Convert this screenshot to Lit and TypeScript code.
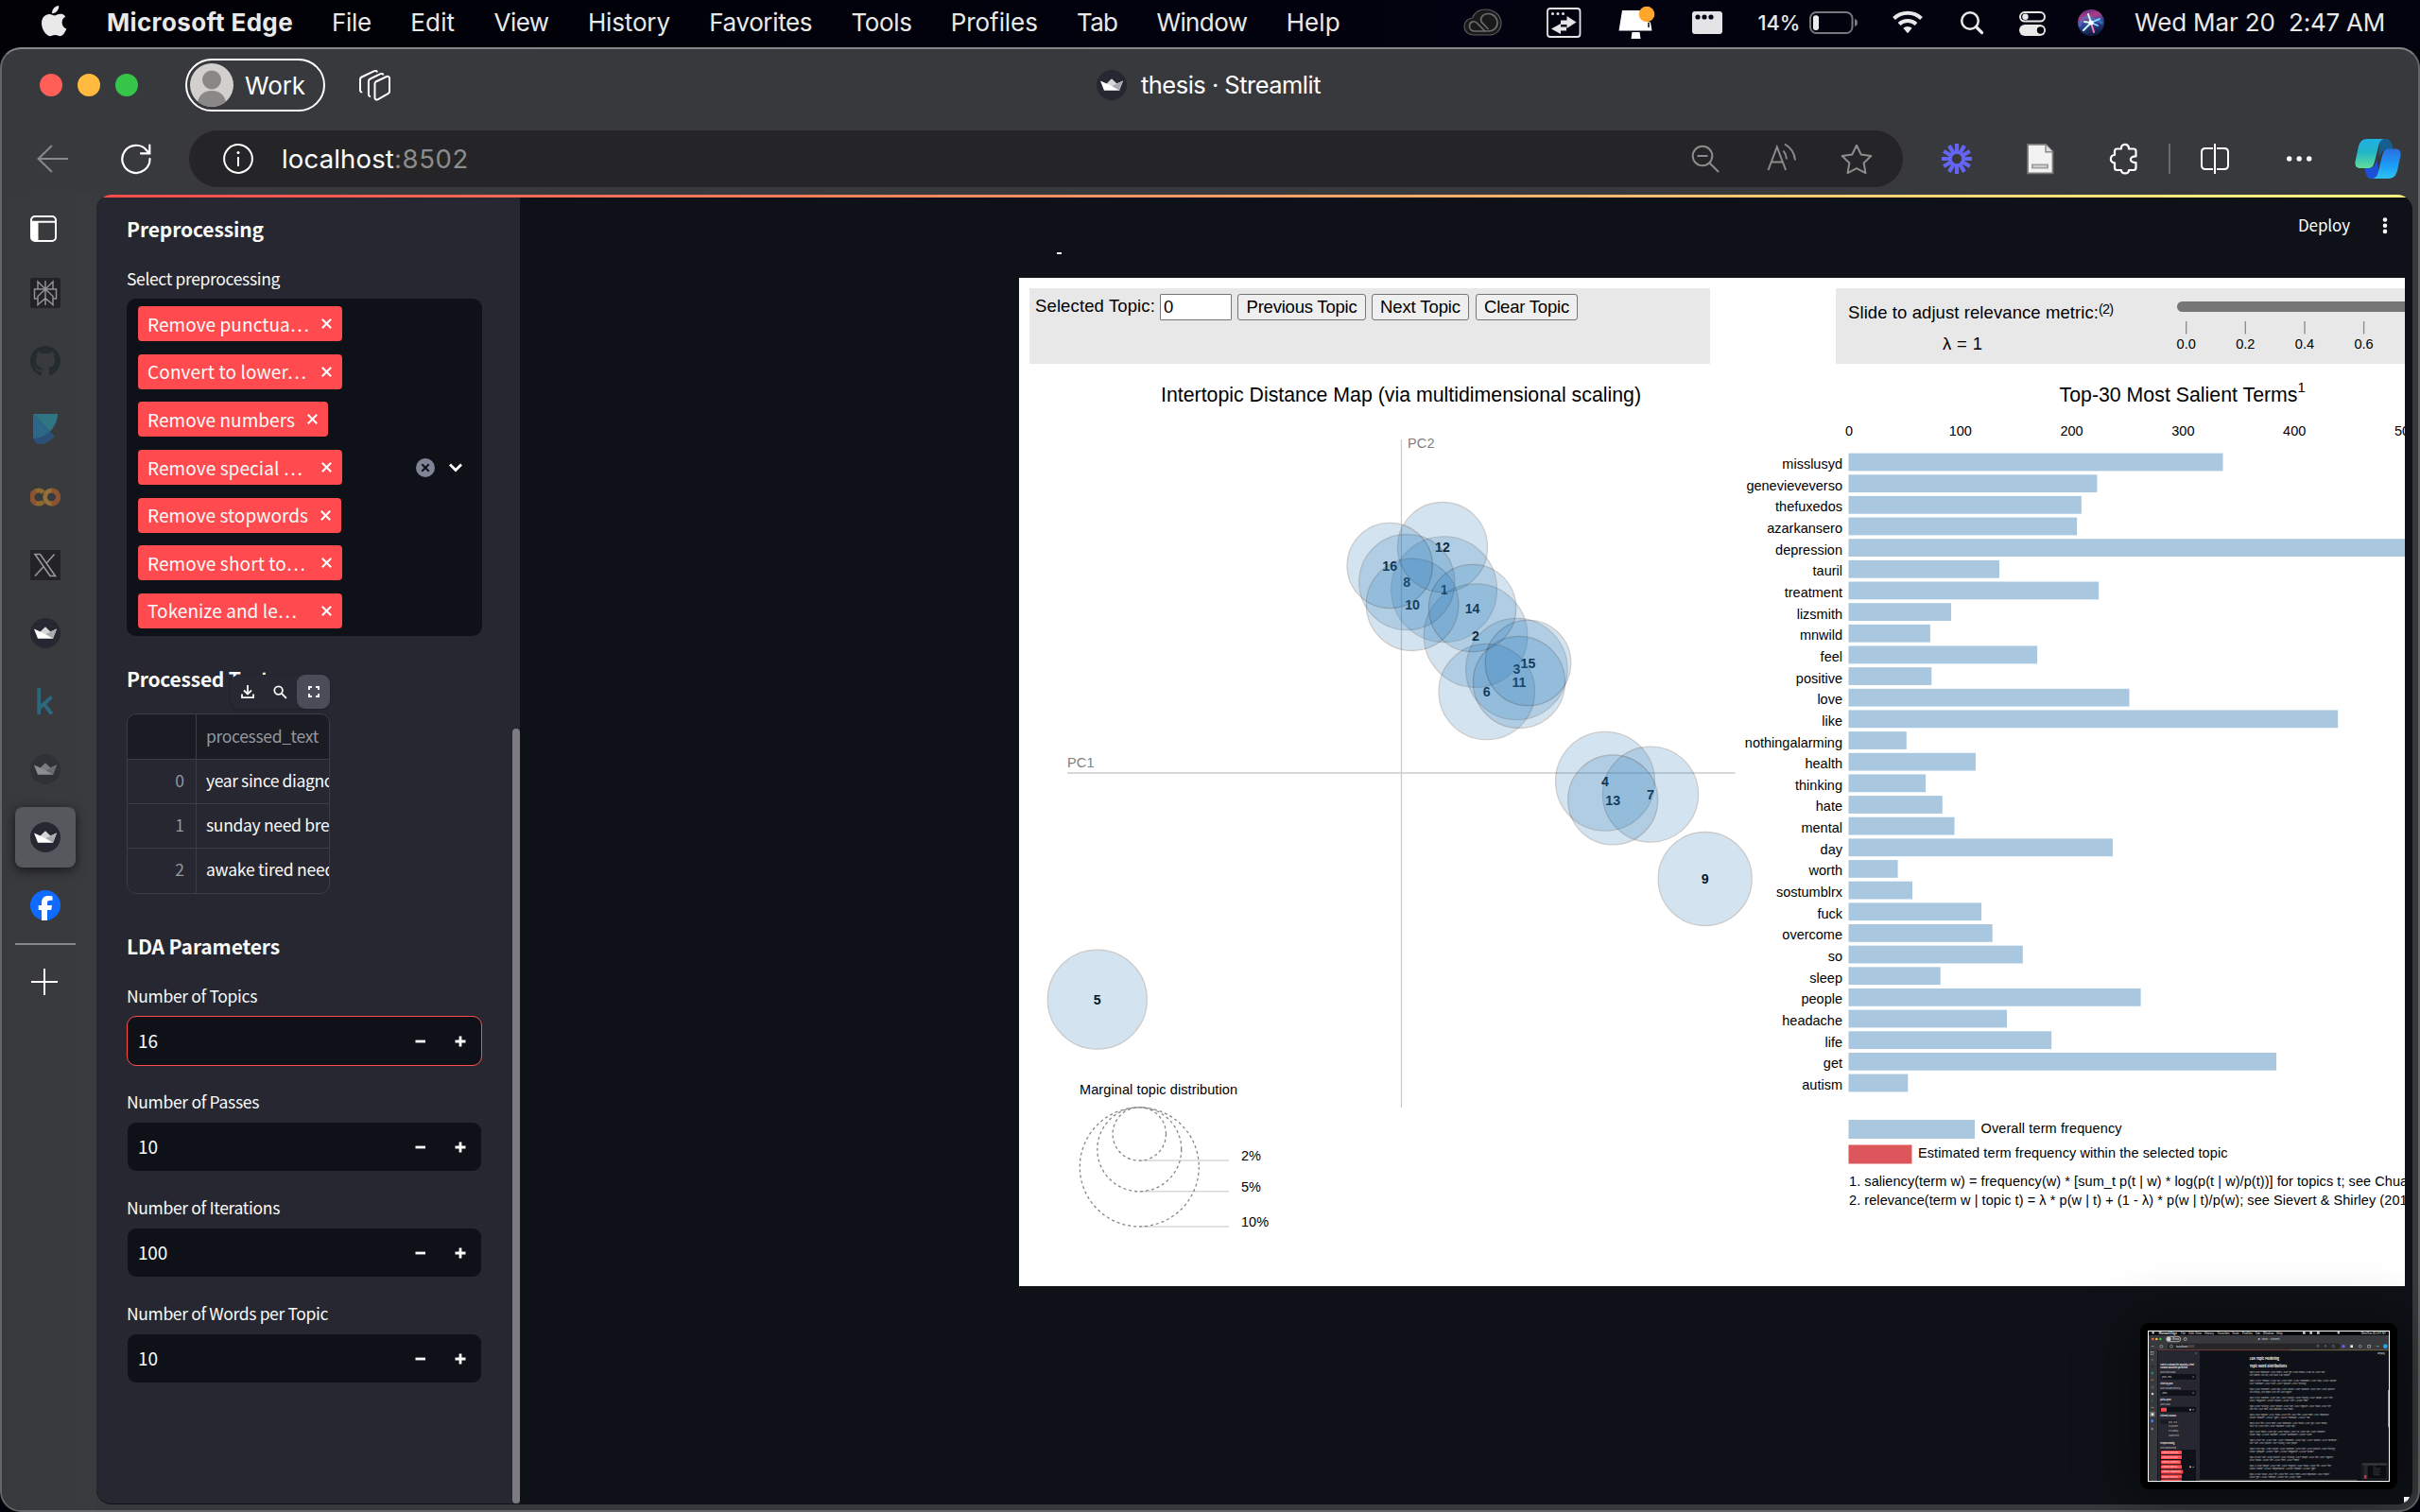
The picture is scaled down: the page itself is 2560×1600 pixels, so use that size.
import { LitElement, html, svg, css } from "lit";
import { customElement, property } from "lit/decorators.js";

/** One line of text whose tracking is adjusted so that it fills `w` pixels. */
@customElement("fit-text")
class FitText extends LitElement {
  @property({ type: Number }) w = 0;
  @property() t = "";
  static styles = css`
    :host { display: inline-block; white-space: pre; flex: none; }
  `;
  firstUpdated() {
    const span = this.renderRoot.querySelector("span") as HTMLElement;
    const natural = span.getBoundingClientRect().width;
    span.style.letterSpacing = `${(this.w - natural) / this.t.length}px`;
  }
  render() {
    return html`<span>${this.t}</span>`;
  }
}

const MENUS: [string, number][] = [
  ["File", 42], ["Edit", 47], ["View", 58], ["History", 87], ["Favorites", 109],
  ["Tools", 64], ["Profiles", 92], ["Tab", 43], ["Window", 96], ["Help", 57],
];

const CHIPS: [string, number, number][] = [
  ["Remove punctua…", 171, 216],
  ["Convert to lower…", 168, 216],
  ["Remove numbers", 156, 201],
  ["Remove special …", 164, 216],
  ["Remove stopwords", 170, 215],
  ["Remove short to…", 167, 216],
  ["Tokenize and le…", 158, 216],
];

const FIELDS: [string, number, string, number, boolean][] = [
  ["Number of Topics", 138, "16", 21, true],
  ["Number of Passes", 140, "10", 21, false],
  ["Number of Iterations", 162, "100", 31, false],
  ["Number of Words per Topic", 213, "10", 21, false],
];

const TERMS: [string, number][] = [
  ["misslusyd", 396], ["genevieveverso", 262.9], ["thefuxedos", 246.3], ["azarkansero", 241.6],
  ["depression", 700], ["tauril", 159.5], ["treatment", 264.7], ["lizsmith", 108.5],
  ["mnwild", 86.4], ["feel", 199.6], ["positive", 87.8], ["love", 297], ["like", 517.7],
  ["nothingalarming", 61.3], ["health", 134.5], ["thinking", 81.6], ["hate", 99.3],
  ["mental", 112], ["day", 279.4], ["worth", 52.1], ["sostumblrx", 67.5], ["fuck", 140.6],
  ["overcome", 152.2], ["so", 184.3], ["sleep", 97.2], ["people", 309.1],
  ["headache", 167.5], ["life", 214.7], ["get", 452.6], ["autism", 62.8],
];

const TOPICS: [number, number, number, number][] = [
  [1, 1527.6, 623.7, 55.8], [2, 1561, 672.6, 54.7], [3, 1604.4, 708, 53.6],
  [4, 1698, 826.7, 52.4], [5, 1160.8, 1057.7, 52.5], [6, 1572.8, 732, 50.7],
  [7, 1746, 840.6, 50.5], [8, 1488.3, 616, 50.5], [9, 1803.7, 930, 49.5],
  [10, 1494.1, 639.8, 48.7], [11, 1607, 722, 48.5], [12, 1526, 579, 47.5],
  [13, 1706.2, 846.4, 47.4], [14, 1557.6, 643.5, 46.1], [15, 1616.5, 701.5, 45.2],
  [16, 1470.2, 598.5, 45.1],
];

const MINI_WORDS = ["depression", "health", "get", "mental", "so", "one", "treatment", "day", "autism", "someone",
  "love", "positive", "thinking", "people", "like", "negative", "know", "life", "feel", "need"];
const miniLine = (k: number, from: number, n: number, lead: string) =>
  lead + Array.from({ length: n }, (_, i) =>
    `0.0${10 + ((k * 7 + i * 5) % 39)}*"${MINI_WORDS[(k * 3 + from + i) % MINI_WORDS.length]}"`).join(" + ");

const crown = (dim = false) => svg`
  <g opacity=${dim ? 0.42 : 1}>
    <circle cx="16" cy="16" r="16" fill="#262730"></circle>
    <path d="M4 11.4 10.8 14.4 16 9.4 21.2 14.4 28 11.4 24 21.8H8Z" fill="#fff"></path>
    <path d="M16 9.4 21.2 14.4 16 17 10.8 14.4Z" fill="#d6d6d9"></path>
    <path d="M28 11.4 24 21.8 16 17Z" fill="#a9aab0"></path>
  </g>`;

const minus = html`<svg width="12" height="14" viewBox="0 0 12 14"><path d="M.5 7h10.500" stroke="#fafafa" stroke-width="2.800"/></svg>`;
const plus = html`<svg width="12" height="14" viewBox="0 0 12 14"><path d="M.5 7h11M6 1.500v11" stroke="#fafafa" stroke-width="2.800"/></svg>`;

@customElement("app-root")
class AppRoot extends LitElement {
  static styles = css`
    :host { display: block; width: 2560px; height: 1600px; overflow: hidden; background: #02020a; }
    * { box-sizing: border-box; }
    svg { display: block; flex: none; }
    .desktop { width: 2560px; height: 1600px; display: flex; flex-direction: column; position: relative;
      font-family: Inter, "Liberation Sans", sans-serif; color: #fff; }
    .menubar { height: 50px; flex: none; display: flex; align-items: flex-start; padding-left: 43px;
      background: linear-gradient(90deg, #000005, #020210 60%, #02030e); color: #e9e9ea;
      font-size: 26px; line-height: 47px; }
    .menubar .app { font-weight: 700; margin-left: 42px; }
    .menus { display: flex; gap: 41.3px; margin-left: 41px; flex: 1; }
    .menus fit-text, .app { display: block; }
    .clock { display: flex; width: 302px; flex: none; }
    .window { height: 1550px; flex: none; border: 2px solid #646567; border-top-color: #858688;
      border-radius: 22px; background: #38393c; display: flex; flex-direction: column; overflow: hidden; }
    .titlebar { height: 76px; flex: none; display: flex; align-items: center; padding-left: 40px; }
    .lights { display: flex; gap: 16px; }
    .light { width: 24px; height: 24px; border-radius: 50%; }
    .red { background: #ff5f57; } .amber { background: #ffba3f; } .green { background: #35c649; }
    .pill { margin-left: 50px; width: 148px; height: 56px; border: 2px solid #fff; border-radius: 28px;
      display: flex; align-items: center; padding-left: 3px; font-size: 26px; }
    .pill fit-text { margin-left: 12px; }
    .spaces { margin-left: 34px; }
    .tabtitle { margin-left: 746px; display: flex; align-items: center; gap: 15px; font-size: 25.5px; }
    .tabtitle fit-text { margin-top: -2px; }
    .toolbar { height: 78px; flex: none; display: flex; align-items: center; padding: 2px 0 0 36px; }
    .reload { margin-left: 56px; }
    .address { margin-left: 40px; width: 1813px; height: 60px; border-radius: 30px; background: #252527;
      display: flex; align-items: center; padding-left: 36px; font-size: 27.5px; }
    .address .host { margin-left: 30px; }
    .address .port { color: #8c8c8d; flex: 1; }
    .tools { margin-left: 27px; }
    .body { display: flex; flex: 1; min-height: 0; }
    .rail { width: 100px; flex: none; display: flex; flex-direction: column; padding: 0 0 0 14px;
      background: linear-gradient(90deg, #38393b, #3a3b3e); }
    .slot { width: 64px; height: 72px; display: flex; align-items: center; justify-content: center; }
    .slot.first { height: 68px; justify-content: flex-start; padding-left: 16px; padding-top: 4px; }
    .tile { width: 64px; height: 64px; border-radius: 8px; background: #57585d; display: flex; align-items: center;
      justify-content: center; box-shadow: 0 3px 12px rgba(0,0,0,.6); }
    .raildiv { width: 64px; height: 2px; background: #86878a; margin-top: 4px; }
    .plus { margin: 24px 0 0 16px; }
    .page { width: 2450px; height: 1385px; flex: none; border-radius: 16px; overflow: hidden;
      background: #0e1117; box-shadow: 0 1px 0 #121216; display: flex; flex-direction: column; }
    .strip { height: 3px; flex: none; background: linear-gradient(90deg, #ff4b4b, #ffa068 50%, #fffd80); }
    .panes { display: flex; flex: 1; min-height: 0; }
    .side { width: 448px; flex: none; background: #262730; color: #fafafa; padding: 17px 0 0 32px; display: flex;
      font-family: "Noto Sans CJK SC", "Noto Sans", sans-serif; }
    .col { width: 376px; flex: none; display: flex; flex-direction: column; }
    .scroll { margin: 545px 0 0 32px; width: 8px; height: 820px; border-radius: 4px; background: #7c7b81; }
    .h { height: 32px; line-height: 32px; font-size: 21px; font-weight: 700; }
    .label { height: 30px; line-height: 33px; font-size: 17.5px; margin-top: 20px; }
    .select { margin-top: 8px; height: 357px; border-radius: 10px; background: #0e1117; display: flex;
      align-items: center; }
    .chips { display: flex; flex-direction: column; gap: 13.6px; margin-left: 12px; width: 294px; }
    .chip { height: 37px; border-radius: 4px; background: #ff4b4f; display: flex; align-items: center;
      justify-content: space-between; padding: 0 11px 0 10px; font-size: 19px; line-height: 35px; }
    .chip fit-text { margin-top: -1px; }
    .chip.w216 { width: 216px; } .chip.w215 { width: 215px; } .chip.w201 { width: 201px; }
    .chev { margin-left: 13px; }
    .h.proc { margin-top: 29px; } .h.lda { margin-top: 39px; }
    .tablewrap { position: relative; margin-top: 21px; width: 215px; }
    .table { width: 215px; height: 191px; border: 1px solid #3b3c46; border-radius: 10px; overflow: hidden;
      font-size: 17.5px; }
    .row { display: flex; height: 47px; border-bottom: 1px solid #3b3c46; line-height: 44px; }
    .row:last-child { border: 0; height: 48px; }
    .row.head { background: #1a1c24; color: #96979d; height: 48px; line-height: 45px; }
    .idx { width: 73px; flex: none; border-right: 1px solid #3b3c46; text-align: right; padding-right: 12px; color: #96979d; }
    .cell { padding-left: 10px; overflow: hidden; }
    .tbar { position: absolute; right: 0; top: -41px; width: 105px; height: 36px; border-radius: 9px;
      background: #272831; box-shadow: 0 1px 3px rgba(0,0,0,.22); display: flex; align-items: center; }
    .tbtn { width: 35px; height: 36px; display: flex; align-items: center; justify-content: center; border-radius: 9px; }
    .tbtn.on { background: #4a4c57; }
    .num { margin-top: 8px; height: 53px; border: 1px solid transparent; border-radius: 10px; background: #0e1117;
      background-clip: padding-box; display: flex; align-items: center; padding: 0 16px 0 11px; font-size: 19px; line-height: 49px; }
    .num.focus { border-color: #ff4b4f; }
    .num .v { flex: 1; margin-top: -2px; }
    .num svg + svg { margin-left: 30px; }
    .group + .group { margin-top: 21px; }
    .group .label { margin-top: 0; }
    .fields { margin-top: 20px; }
    .main { width: 2002px; display: flex; flex-direction: column; font-family: "Liberation Sans", Arial, sans-serif; }
    .top { height: 85px; display: flex; align-items: flex-start; padding-top: 13.5px;
      font: 17px/30px "Noto Sans CJK SC", "Noto Sans", sans-serif; }
    .dash { margin: 44.500px 0 0 568px; width: 5px; height: 2px; background: #fafafa; }
    .deploy { margin-left: 1308px; }
    .kebab { margin-left: 32.500px; margin-top: 6px; }
    .frame { margin-left: 528px; width: 1466px; height: 1067px; background: #fff; overflow: hidden; color: #000;
      padding-top: 11px; }
    .bars { display: flex; height: 80px; width: 1600px; padding-left: 11px; font-size: 18.5px; }
    .bar1 { width: 720px; background: #e8e8e8; display: flex; align-items: flex-start; padding: 6px 0 0 6px; line-height: 26px; }
    .tinput { margin-left: 5px; width: 76px; height: 28px; border: 1px solid #767676; border-radius: 1px; background: #fff; padding-left: 3px; }
    .btn { height: 28px; border: 1px solid #767676; border-radius: 3px; background: #efefef; margin-left: 6px; text-align: center; }
    .b1 { width: 136px; } .b2 { width: 103px; } .b3 { width: 108px; margin-left: 7px; }
    .bar2 { width: 700px; margin-left: 133px; background: #e8e8e8; }
    .thumb { position: absolute; left: 2264px; top: 1400px; width: 272px; height: 176px; border-radius: 9px; background: #000;
      display: flex; align-items: center; justify-content: center; box-shadow: 0 8px 60px 10px rgba(0,0,0,.38); }
    .corner { position: absolute; left: 2543px; top: 1584px; }
  `;

  menubar() {
    return html`<div class="menubar">
      <svg width="28" height="48" viewBox="0 0 28 48">
        <path fill="#e9e9ea" d="M19.200 6c.3 2.200-.6 4.300-1.900 5.800-1.300 1.500-3.300 2.600-5.200 2.400-.3-2.100.7-4.300 1.900-5.600C15.400 7.100 17.500 6.100 19.200 6ZM26.300 17.600c-2.300 1.400-3.700 3.400-3.700 6.200 0 3.300 2 5.600 4.700 6.700-.7 2.100-3.600 7.800-6.700 7.800-1.900 0-2.900-1.200-5.200-1.200-2.400 0-3.500 1.200-5.300 1.200C6.300 38.300 1 31.800 1 24.600c0-6.300 4-9.700 8.100-9.700 2.400 0 4.300 1.500 5.800 1.500 1.400 0 3.500-1.600 6.300-1.600 1.400 0 3.700.5 5.100 2.800Z"/>
      </svg>
      <fit-text class="app" .w=${197} .t=${"Microsoft Edge"}></fit-text>
      <div class="menus">${MENUS.map(([t, w]) => html`<fit-text .w=${w} .t=${t}></fit-text>`)}</div>
      <svg width="718" height="48" viewBox="1540 0 718 48">
        <defs>
          <linearGradient id="siri" x1="0" y1="0" x2=".3" y2="1"><stop offset="0" stop-color="#4a2f86"/><stop offset=".35" stop-color="#b23c86"/><stop offset=".6" stop-color="#31489c"/><stop offset="1" stop-color="#151d44"/></linearGradient>
        </defs>
        <path d="M1559 37c-6 0-10-4-10-9s3.500-8.500 8.500-9C1560 13 1565 10 1571 10c9 0 17 6 17 14.500 0 7.500-5.500 12.500-13 12.500Z" fill="#1a1a1b" stroke="#5a5a5c" stroke-width="1.200"/>
        <path d="M1571.500 33.500 1562 24c-2.500-2.500-7.500-1-7.500 3.500 0 3 2 5.500 5.500 5.500h14c6 0 10-3.500 10-9 0-5-4-9.500-9.500-9.500-6 0-9 4.500-7.500 8.500l7.500 8" fill="none" stroke="#6c6c6e" stroke-width="1.700"/>
        <rect x="1637" y="9" width="34.500" height="30" rx="3" fill="none" stroke="#e4e4e6" stroke-width="1.800"/>
        <g fill="#e4e4e6"><circle cx="1642.500" cy="14.500" r="1.500"/><circle cx="1648" cy="14.500" r="1.500"/><circle cx="1653.500" cy="14.500" r="1.500"/>
          <path d="M1651 21.500h6.500v-4.500l10 6.500-10 6.500v-4H1651ZM1657 28.500h-6v-3.500l-10 5.500 10 5.500v-3.500h6Z"/></g>
        <path d="M1716 11h23.500a8 8 0 0 0 6.500 12.500l1.500 9H1712.500Z" fill="#fff"/><path d="M1726.500 34h8l1 7h-10Z" fill="#fff"/>
        <path d="M1744 24v5" stroke="#02030f" stroke-width="1.500"/>
        <circle cx="1742" cy="15" r="8.300" fill="#ffa62b"/>
        <rect x="1790" y="12" width="32" height="24" rx="3" fill="#e4e4e6"/>
        <g fill="#05060f"><circle cx="1796" cy="18" r="2.600"/><circle cx="1803" cy="18" r="2.600"/><circle cx="1810" cy="18" r="2.600"/></g>
        <text x="1859.500" y="32" font-size="22" font-weight="500" textLength="45" lengthAdjust="spacingAndGlyphs" fill="#e9e9ea">14%</text>
        <rect x="1915" y="13" width="44.500" height="22" rx="6.500" fill="none" stroke="#77777c" stroke-width="2"/>
        <rect x="1918" y="16.300" width="6" height="15.600" rx="2.600" fill="#ececee"/>
        <path d="M1962 20c2.200.6 3 2 3 4s-.8 3.400-3 4Z" fill="#77777c"/>
        <g fill="none" stroke="#e9e9ea" stroke-width="4"><path d="M2003.500 19.500a21 21 0 0 1 29 0" /><path d="M2009 25.500a13 13 0 0 1 18 0"/></g>
        <path d="M2018 35.300l-4.700-5.500a7 7 0 0 1 9.400 0Z" fill="#e9e9ea"/>
        <circle cx="2084" cy="22" r="8.800" fill="none" stroke="#e9e9ea" stroke-width="2.500"/><path d="M2090.500 28.500 2096.500 34.500" stroke="#e9e9ea" stroke-width="3.200" stroke-linecap="round"/>
        <rect x="2137" y="13" width="26" height="9.600" rx="4.800" fill="none" stroke="#e9e9ea" stroke-width="2"/><circle cx="2142.500" cy="17.800" r="3.200" fill="#e9e9ea"/>
        <rect x="2136" y="26" width="28" height="12" rx="6" fill="#e9e9ea"/><circle cx="2158.500" cy="32" r="3.700" fill="#05060f"/>
        <circle cx="2212" cy="24" r="14" fill="url(#siri)"/>
        <path d="M2200 28c1-8 6-12 12-9 5 3 9 2 12 6" fill="none" stroke="#3a86c8" stroke-width="3" opacity=".6"/>
        <path d="M2212 24l-3-9M2212 24l-8 8M2212 24l-7-1" stroke="#c8fbf2" stroke-width="2" stroke-linecap="round"/>
        <path d="M2212 24l9-4M2212 24l7 3" stroke="#8fe0ff" stroke-width="1.800" stroke-linecap="round"/><path d="M2212 24l3 10" stroke="#ff7ab4" stroke-width="2" stroke-linecap="round"/>
        <circle cx="2212" cy="24" r="2.500" fill="#fff"/>
      </svg>
      <div class="clock"><fit-text .w=${163} .t=${"Wed Mar 20  "}></fit-text><fit-text .w=${102} .t=${"2:47 AM"}></fit-text></div>
    </div>`;
  }

  titlebar() {
    return html`<div class="titlebar">
      <div class="lights"><div class="light red"></div><div class="light amber"></div><div class="light green"></div></div>
      <div class="pill">
        <svg width="46" height="46" viewBox="0 0 46 46"><clipPath id="av"><circle cx="23" cy="23" r="23"/></clipPath>
          <g clip-path="url(#av)"><rect width="46" height="46" fill="#d2d0ce"/><circle cx="23" cy="17.500" r="10" fill="#8a8886"/>
          <path d="M7.500 46c0-11 6-17 15.500-17s15.500 6 15.500 17Z" fill="#8a8886"/></g></svg>
        <fit-text .w=${64} .t=${"Work"}></fit-text>
      </div>
      <svg class="spaces" width="36" height="36" viewBox="0 0 36 36" fill="none" stroke="#fff" stroke-width="2" stroke-linejoin="round">
        <path d="M19.500 14.500l11.500-5.500c1.500-.7 3 .2 3 1.800v14c0 1-.5 1.800-1.500 2.300l-11 6.200c-1.500.8-3-.1-3-1.700v-14.500c0-1.100.4-2.100 1-2.600Z"/>
        <path d="M27.500 7.500c-.4-1.500-1.600-2-3-1.300l-11 5.300c-1 .5-1.600 1.300-1.600 2.500v14c0 1.400 1 2.200 2.200 2"/>
        <path d="M21 4.500c-.4-1.500-1.600-2-3-1.300L4.600 9.500C3.500 10 3 10.800 3 12v11.500c0 1.400 1 2.200 2.200 2"/>
      </svg>
      <div class="tabtitle"><svg width="32" height="32" viewBox="0 0 32 32">${crown()}</svg>
        <fit-text .w=${190} .t=${"thesis · Streamlit"}></fit-text></div>
    </div>`;
  }

  toolbar() {
    const rays = Array.from({ length: 12 }, (_, i) =>
      svg`<path d="M2070 160.500V152" stroke="#6464f5" stroke-width="4.200" transform="rotate(${i * 30} 2070 168)"></path>`);
    return html`<div class="toolbar">
      <svg width="34" height="34" viewBox="0 0 34 34" fill="none" stroke="#89898b" stroke-width="2"><path d="M17 3 2.500 17 17 31M3 17h31"/></svg>
      <svg class="reload" width="32" height="34" viewBox="0 0 32 34" fill="none" stroke="#fff" stroke-width="2.200" stroke-linecap="round"><path d="M30.500 17A14.600 14.600 0 1 1 27.500 8.500L30 11M30.300 2.500V11.300H21"/></svg>
      <div class="address">
        <svg width="32" height="32" viewBox="0 0 32 32"><circle cx="16" cy="16" r="14.900" fill="none" stroke="#fff" stroke-width="2"/><circle cx="16" cy="9.500" r="1.500" fill="#fff"/><path d="M16 14v10" stroke="#fff" stroke-width="2"/></svg>
        <fit-text class="host" .w=${119} .t=${"localhost"}></fit-text><div class="port"><fit-text .w=${79} .t=${":8502"}></fit-text></div>
        <svg width="230" height="60" viewBox="1783 138 230 60" fill="none" stroke="#8c8c8d" stroke-width="2">
          <circle cx="1801" cy="165" r="10.300"/><path d="M1795.500 165h11M1808.500 172.500l9.500 9.500"/>
          <path d="M1870.500 180l9.300-24.500 9.300 24.500M1873.500 171.500h12.500M1886.500 159.500c2 2.500 3.300 6 3.500 9M1888 152.500c7 4 10.500 10 11 17"/>
          <path d="M1964 153.800l4.700 9.700 10.600 1.500-7.700 7.500 1.900 10.600-9.500-5-9.500 5 1.900-10.600-7.700-7.500 10.600-1.500Z" stroke-linejoin="round"/>
        </svg>
      </div>
      <svg class="tools" width="510" height="60" viewBox="2040 138 510 60">
        <defs>
          <linearGradient id="c1" x1="0" y1="0" x2="0" y2="1"><stop offset="0" stop-color="#1fb0e4"/><stop offset=".45" stop-color="#22b5c8"/><stop offset="1" stop-color="#62dd96"/></linearGradient>
          <linearGradient id="c2" x1="0" y1="0" x2="0" y2="1"><stop offset="0" stop-color="#2a6fdc"/><stop offset=".55" stop-color="#1c9cf8"/><stop offset="1" stop-color="#2fc3f0"/></linearGradient>
        </defs>
        ${rays}<circle cx="2070" cy="168" r="7" fill="none" stroke="#6464f5" stroke-width="3.600"/>
        <path d="M2145 152.800h19l7.500 7.500v23h-26.500Z" fill="#f2f2f2" stroke="#777" stroke-width="1.800"/><path d="M2164 152.800v8h7.500" fill="#ddd" stroke="#777" stroke-width="1.200"/>
        <rect x="2149" y="173.500" width="18" height="5" fill="#a0a0a0"/><path d="M2151 176h14" stroke="#ddd" stroke-width="1.500"/>
        <path d="M2244 157.500c-1-6 8.500-6.500 8 0h5c1.500 0 2.500 1 2.500 2.500v5.500c-7.500-.5-7.500 7 0 6.500v5.500c0 1.500-1 2.500-2.500 2.500h-5c.5 4.500-8 4.500-8 0h-4.500c-1.500 0-2.500-1-2.500-2.500v-5.200c-5.500.3-5.500-8.600 0-8.300v-4c0-1.500 1-2.500 2.500-2.500Z" fill="none" stroke="#fff" stroke-width="2.200" stroke-linejoin="round"/>
        <path d="M2295 152v32" stroke="#68696b" stroke-width="2"/>
        <path d="M2338 157h-5c-2.500 0-4 1.500-4 4v14c0 2.500 1.500 4 4 4h5M2348 157h5c2.500 0 4 1.500 4 4v14c0 2.500-1.500 4-4 4h-5M2343 152v32M2338 157h3M2338 179h3M2345 157h3M2345 179h3" fill="none" stroke="#fff" stroke-width="2"/>
        <g fill="#fff"><circle cx="2421.700" cy="168" r="2.700"/><circle cx="2432.200" cy="168" r="2.700"/><circle cx="2442.700" cy="168" r="2.700"/></g>
        <path d="M2517 147h6c4 0 6 1.500 7 5l2 6.500h-7c-5 0-7 4-8.500 9.500Z" fill="#155e8f"/>
        <path d="M2501 178h5c5 0 7-4 8.500-9.500l1.500 12-3 8.500h-4c-4 0-5-1.500-6-5Z" fill="#1d50d8"/>
        <path d="M2505 147h17c-4 1-5 4-6 8l-4 16c-1.500 5-3 7-7 7h-8c-4 0-6-2-5.500-7l3-14c1.500-7 4-10 10.500-10Z" fill="url(#c1)"/>
        <path d="M2526 189h-16c4-1 5-4 6-8l4-16c1.500-5 3-7.500 7-7.500h7c4 0 6 2 5.500 7l-3 14c-1.500 7-4 10.500-10.500 10.500Z" fill="url(#c2)"/>
      </svg>
    </div>`;
  }

  rail() {
    return html`<div class="rail">
      <div class="slot first"><svg width="28" height="28" viewBox="0 0 28 28"><rect x="1" y="1" width="26" height="26" rx="4" fill="none" stroke="#fff" stroke-width="2"/><path d="M1 6.800h26" stroke="#fff" stroke-width="2"/><path d="M1 7h7.500v20H4a3 3 0 0 1-3-3Z" fill="#fff"/></svg></div>
      <div class="slot"><svg width="32" height="32" viewBox="0 0 32 32"><rect width="32" height="32" rx="2.500" fill="#232325"/><g fill="none" stroke="#8f9092" stroke-width="1.500"><path d="M16 3v26M8 4v8h16V4l-8 8Zm8 8L8 19.500v9l8-7 8 7v-9ZM8 22H4.500V12h23v10H24"/></g></svg></div>
      <div class="slot"><svg width="32" height="32" viewBox="0 0 16 16"><path fill="#252c2f" d="M8 0C3.580 0 0 3.580 0 8c0 3.540 2.290 6.530 5.470 7.590.4.070.55-.17.55-.38 0-.19-.01-.82-.01-1.490-2.010.37-2.530-.49-2.690-.94-.09-.23-.48-.94-.82-1.130-.28-.15-.68-.52-.01-.53.63-.01 1.080.58 1.230.82.72 1.210 1.870.87 2.330.66.07-.52.28-.87.51-1.070-1.780-.2-3.640-.89-3.640-3.950 0-.87.31-1.590.82-2.150-.08-.2-.36-1.020.08-2.120 0 0 .67-.21 2.200.82.64-.18 1.320-.27 2-.27s1.360.09 2 .27c1.530-1.040 2.200-.82 2.200-.82.44 1.100.16 1.920.08 2.120.51.56.82 1.270.82 2.150 0 3.070-1.870 3.750-3.650 3.950.29.25.54.73.54 1.480 0 1.070-.01 1.930-.01 2.200 0 .21.15.46.55.38A8.010 8.010 0 0 0 16 8c0-4.420-3.580-8-8-8Z"/></svg></div>
      <div class="slot"><svg width="26" height="32" viewBox="0 0 26 32"><path d="M0 0h26c0 7-3 13-8 18.500Z" fill="#2f7583"/><path d="M0 0 18 18.500C13 23.500 7 26 0 26Z" fill="#2c6689"/><path d="M0 26c7 0 13-2.500 18-7.500l5 5C18 29 13 32 8 32c-4 0-6-2-8-6Z" fill="#2b5078"/></svg></div>
      <div class="slot"><svg width="32" height="20" viewBox="0 0 32 20" fill="none" stroke-width="4.800"><path d="M14 5.200a7 7 0 1 0 0 9.600" stroke="#8f6a2f"/><path d="M6 3.500A7 7 0 0 0 6 16.500" stroke="#8d5330"/><circle cx="22.600" cy="10" r="7" stroke="#93703a"/><path d="M22.600 3a7 7 0 0 1 0 14" stroke="#8d5330"/></svg></div>
      <div class="slot"><svg width="32" height="32" viewBox="0 0 32 32"><rect width="32" height="32" fill="#232325"/><path d="M5 4.500h5.500L26.500 27.500H21ZM25.500 4.500 17 14.300M14.200 17.500 5 27.500" fill="none" stroke="#97989a" stroke-width="1.600"/></svg></div>
      <div class="slot"><svg width="32" height="32" viewBox="0 0 32 32">${crown()}</svg></div>
      <div class="slot"><svg width="18" height="28" viewBox="0 0 18 28"><path d="M2.200 0v28M15.500 9.500 3 21M7.500 17 15.800 27.500" fill="none" stroke="#2b6880" stroke-width="3.800"/></svg></div>
      <div class="slot"><svg width="32" height="32" viewBox="0 0 32 32">${crown(true)}</svg></div>
      <div class="slot"><div class="tile"><svg width="32" height="32" viewBox="0 0 32 32">${crown()}</svg></div></div>
      <div class="slot"><svg width="32" height="32" viewBox="0 0 32 32"><circle cx="16" cy="16" r="16" fill="#0f6bff"/><path d="M12 32V21H8.700v-5H12v-2.500c0-5 2.500-7.500 7-7.500 1.700 0 3.500.3 4.500.5v4.300h-2.300c-2.400 0-3.200 1.200-3.200 3V16h5l-.8 5H18v11Z" fill="#fff"/></svg></div>
      <div class="raildiv"></div>
      <svg class="plus" width="30" height="30" viewBox="0 0 30 30"><path d="M15 1v28M1 15h28" stroke="#fff" stroke-width="2"/></svg>
    </div>`;
  }

  sidebar() {
    return html`<div class="side"><div class="col">
      <div class="h"><fit-text .w=${145} .t=${"Preprocessing"}></fit-text></div>
      <div class="label"><fit-text .w=${162} .t=${"Select preprocessing"}></fit-text></div>
      <div class="select">
        <div class="chips">${CHIPS.map(([t, w, cw]) => html`<div class="chip w${cw}"><fit-text .w=${w} .t=${t}></fit-text>
          <svg width="11" height="11" viewBox="0 0 11 11"><path d="M.8.8l9.400 9.400M10.200.8.8 10.200" stroke="#fff" stroke-width="2"/></svg></div>`)}</div>
        <svg width="20" height="20" viewBox="0 0 20 20"><circle cx="10" cy="10" r="10" fill="#808495"/><path d="M6.300 6.300l7.400 7.400M13.700 6.300 6.300 13.700" stroke="#0e1117" stroke-width="2"/></svg>
        <svg class="chev" width="18" height="20" viewBox="0 0 18 20"><path d="M3 6.500l6 6 6-6" fill="none" stroke="#fafafa" stroke-width="2.800"/></svg>
      </div>
      <div class="h proc"><fit-text .w=${150} .t=${"Processed Text"}></fit-text></div>
      <div class="tablewrap">
        <div class="table">
          <div class="row head"><div class="idx"></div><div class="cell"><fit-text .w=${119} .t=${"processed_text"}></fit-text></div></div>
          <div class="row"><div class="idx">0</div><div class="cell"><fit-text .w=${155} .t=${"year since diagnosis"}></fit-text></div></div>
          <div class="row"><div class="idx">1</div><div class="cell"><fit-text .w=${149} .t=${"sunday need break"}></fit-text></div></div>
          <div class="row"><div class="idx">2</div><div class="cell"><fit-text .w=${136} .t=${"awake tired need"}></fit-text></div></div>
        </div>
        <div class="tbar">
          <div class="tbtn"><svg width="14" height="14" viewBox="0 0 14 14" fill="none" stroke="#fafafa" stroke-width="1.800"><path d="M7 0v9M3 5.500l4 4 4-4M1 9.500v3.600h12V9.500"/></svg></div>
          <div class="tbtn"><svg width="15" height="15" viewBox="0 0 15 15" fill="none" stroke="#fafafa" stroke-width="1.800"><circle cx="5.600" cy="5.600" r="4.300"/><path d="M8.900 8.900l5 5"/></svg></div>
          <div class="tbtn on"><svg width="12" height="12" viewBox="0 0 12 12" fill="none" stroke="#fafafa" stroke-width="2"><path d="M1 4V1h3M8 1h3v3M11 8v3H8M4 11H1V8"/></svg></div>
        </div>
      </div>
      <div class="h lda"><fit-text .w=${162} .t=${"LDA Parameters"}></fit-text></div>
      <div class="fields">${FIELDS.map(([l, lw, v, vw, f]) => html`<div class="group">
        <div class="label"><fit-text .w=${lw} .t=${l}></fit-text></div>
        <div class="num ${f ? "focus" : ""}"><div class="v"><fit-text .w=${vw} .t=${v}></fit-text></div>${minus}${plus}</div>
      </div>`)}</div>
    </div><div class="scroll"></div></div>`;
  }

  chart() {
    return html`<svg width="1466" height="976" viewBox="1078 385 1466 976" font-size="14.5">
      <text x="1228" y="425" font-size="21.300" textLength="508">Intertopic Distance Map (via multidimensional scaling)</text>
      <text x="2178.500" y="425" font-size="21.300" textLength="252">Top-30 Most Salient Terms</text>
      <text x="2430.500" y="415" font-size="14.800">1</text>
      <path d="M1482.500 465V1172M1129 818H1835.500" stroke="#ccc" stroke-width="1.300"/>
      <g fill="#808080"><text x="1489" y="474" textLength="28.500">PC2</text><text x="1129" y="812" textLength="28.500">PC1</text></g>
      <g font-weight="700" font-size="14.200" text-anchor="middle">${TOPICS.map(([n, x, y]) => svg`<text x=${x} y=${y + 5.3}>${n}</text>`)}</g>
      ${TOPICS.map(([, x, y, r]) => svg`<circle cx=${x} cy=${y} r=${r} fill="#2a7ab9" stroke="#000" stroke-width="1.300" opacity="0.2"></circle>`)}
      <text x="1142" y="1158" textLength="167">Marginal topic distribution</text>
      <path d="M1205 1228h95M1205 1260.700h95M1205 1298h95" stroke="#d8d8d8" stroke-width="1.500"/>
      <g fill="none" stroke="#868686" stroke-width="1.300" stroke-dasharray="3 3">
        <circle cx="1205.300" cy="1200" r="28.200"/><circle cx="1205.300" cy="1216.300" r="44.500"/><circle cx="1205.300" cy="1234.900" r="63"/></g>
      <text x="1313" y="1228">2%</text><text x="1313" y="1261">5%</text><text x="1313" y="1298">10%</text>
      <g text-anchor="middle">${[0, 1, 2, 3, 4, 5].map((i) => svg`<text x=${1956 + i * 117.8} y="461">${i * 100}</text>`)}</g>
      ${TERMS.map(([t, w], i) => svg`<rect x="1955.500" y=${479.6 + i * 22.655} width=${w} height="18.800" fill="#a9c8e0"></rect>
        <text x="1949" y=${496 + i * 22.655} text-anchor="end">${t}</text>`)}
      <rect x="1955.500" y="1185" width="133.500" height="20" fill="#a9c8e0"/><rect x="1955.500" y="1211.500" width="67" height="20" fill="#dd565b"/>
      <text x="2095.500" y="1198.700" textLength="149">Overall term frequency</text>
      <text x="2029" y="1224.800" textLength="327.500">Estimated term frequency within the selected topic</text>
      <g letter-spacing=".065"><text x="1956" y="1255">1. saliency(term w) = frequency(w) * [sum_t p(t | w) * log(p(t | w)/p(t))] for topics t; see Chuang</text>
      <text x="1956" y="1275">2. relevance(term w | topic t) = λ * p(w | t) + (1 - λ) * p(w | t)/p(w); see Sievert &amp; Shirley (2014)</text></g>
    </svg>`;
  }

  main() {
    return html`<div class="main">
      <div class="top"><div class="dash"></div>
        <fit-text class="deploy" .w=${55} .t=${"Deploy"}></fit-text>
        <svg class="kebab" width="8" height="20" viewBox="0 0 8 20" fill="#fafafa"><circle cx="4" cy="3.500" r="2.300"/><circle cx="4" cy="9.700" r="2.300"/><circle cx="4" cy="15.900" r="2.300"/></svg>
      </div>
      <div class="frame">
        <div class="bars">
          <div class="bar1"><fit-text .w=${127} .t=${"Selected Topic:"}></fit-text>
            <div class="tinput">0</div>
            <div class="btn b1"><fit-text .w=${117} .t=${"Previous Topic"}></fit-text></div>
            <div class="btn b2"><fit-text .w=${85} .t=${"Next Topic"}></fit-text></div>
            <div class="btn b3"><fit-text .w=${90} .t=${"Clear Topic"}></fit-text></div>
          </div>
          <div class="bar2"><svg width="700" height="80" viewBox="1942 305 700 80">
            <text x="1955" y="337" font-size="18.500" textLength="265">Slide to adjust relevance metric:</text><text x="2220" y="332" font-size="14.500" textLength="16">(2)</text>
            <text x="2055" y="370" font-size="18.500" textLength="42">λ = 1</text>
            <rect x="2303" y="319" width="320" height="11" rx="5.500" fill="#767676"/>
            <path d="M2312.700 340v13.500M2375.300 340v13.500M2438 340v13.500M2500.600 340v13.500" stroke="#8a8a8a" stroke-width="1.300"/>
            <g font-size="14.600" text-anchor="middle"><text x="2312.700" y="368.500">0.0</text><text x="2375.300" y="368.500">0.2</text><text x="2438" y="368.500">0.4</text><text x="2500.600" y="368.500">0.6</text></g>
          </svg></div>
        </div>
        ${this.chart()}
      </div>
    </div>`;
  }

  thumb() {
    const chipW = [66, 66, 63, 66, 70, 66, 66];
    return html`<div class="thumb"><svg width="256" height="160" viewBox="96 84 768 480" font-family="Noto Sans CJK SC, sans-serif">
      <rect x="96" y="84" width="768" height="480" fill="#fff"/><rect x="99" y="87" width="762" height="474" fill="#0e1117"/>
      <rect x="99" y="87" width="762" height="12" fill="#05060c"/><rect x="99" y="99" width="762" height="46" fill="#38393c"/><rect x="99" y="145" width="27" height="416" fill="#38393c"/>
      <text x="131" y="95" font-size="9" font-weight="700" fill="#eee" textLength="57" lengthAdjust="spacingAndGlyphs">Microsoft Edge</text>
      <g font-size="9" fill="#eee"><text x="201" y="95">File</text><text x="226" y="95">Edit</text><text x="247" y="95">View</text><text x="276" y="95">History</text><text x="317" y="95">Favorites</text><text x="363" y="95">Tools</text><text x="396" y="95">Profiles</text><text x="437" y="95">Tab</text><text x="462" y="95">Window</text><text x="504" y="95">Help</text></g>
      <text x="773" y="95" font-size="9" fill="#eee" textLength="78" lengthAdjust="spacingAndGlyphs">Wed Mar 20 2:47 AM</text>
      <g fill="#ddd"><circle cx="113" cy="91" r="3.500"/><rect x="588" y="88" width="8" height="7"/><rect x="610" y="88" width="8" height="7"/><rect x="633" y="88" width="8" height="7"/><rect x="698" y="88" width="7" height="6"/></g>
      <circle cx="112" cy="111" r="3.800" fill="#ff5f57"/><circle cx="124" cy="111" r="3.800" fill="#ffba3f"/><circle cx="136" cy="111" r="3.800" fill="#35c649"/>
      <rect x="155" y="103" width="45" height="16" rx="8" fill="none" stroke="#ddd" stroke-width="2"/><circle cx="163" cy="111" r="7" fill="#ccc"/><text x="174" y="114" font-size="9" fill="#eee">Work</text>
      <circle cx="215" cy="111" r="4.500" fill="none" stroke="#ccc" stroke-width="2"/>
      <circle cx="449" cy="111" r="3" fill="#bbb"/><text x="458" y="114" font-size="8" fill="#ddd" textLength="57" lengthAdjust="spacingAndGlyphs">thesis · Streamlit</text>
      <rect x="158" y="125" width="548" height="18" rx="9" fill="#252527"/><text x="186" y="137" font-size="9" fill="#eee" textLength="59" lengthAdjust="spacingAndGlyphs">localhost<tspan fill="#888">:8502</tspan></text>
      <g fill="none" stroke="#aaa" stroke-width="2"><circle cx="139" cy="134" r="4.500"/><circle cx="171" cy="134" r="4.500"/><path d="M107 134h9"/><circle cx="770" cy="134" r="4"/><rect x="794" y="130" width="9" height="8"/><path d="M821 134h9"/></g>
      <g fill="none" stroke="#777" stroke-width="2"><circle cx="636" cy="133" r="3.500"/><circle cx="660" cy="133" r="3"/><circle cx="685" cy="134" r="4"/></g>
      <circle cx="717" cy="134" r="5" fill="#6464f5"/><rect x="739" y="130" width="8" height="8" fill="#eee"/><circle cx="850" cy="134" r="7" fill="#22a5e8"/>
      <path d="M128 146h420" stroke="#a5504a" stroke-width="2"/><path d="M548 146h312" stroke="#a08a55" stroke-width="2"/>
      <rect x="128" y="148" width="133" height="413" fill="#262730"/>
      <g fill="#fafafa" font-weight="700" font-size="8"><text x="136" y="194" textLength="107" lengthAdjust="spacingAndGlyphs">Select a column for analysis, a text</text><text x="136" y="204" textLength="86" lengthAdjust="spacingAndGlyphs">column would be perferred</text>
        <text x="136" y="255" textLength="40" lengthAdjust="spacingAndGlyphs">Filter by year</text><text x="136" y="306" textLength="34" lengthAdjust="spacingAndGlyphs">pick a year</text><text x="136" y="358" textLength="50" lengthAdjust="spacingAndGlyphs">Filtered Column</text><text x="136" y="443" textLength="45" lengthAdjust="spacingAndGlyphs">Preprocessing</text></g>
      <g fill="#ddd" font-size="6.500"><text x="136" y="218" textLength="48" lengthAdjust="spacingAndGlyphs">Select a text column</text><text x="136" y="270" textLength="64" lengthAdjust="spacingAndGlyphs">Select a column to filter by</text><text x="136" y="321" textLength="31" lengthAdjust="spacingAndGlyphs">Select values</text><text x="136" y="459" textLength="50" lengthAdjust="spacingAndGlyphs">Select preprocessing</text></g>
      <g fill="#0e1117"><rect x="136" y="222" width="113" height="17" rx="3"/><rect x="136" y="274" width="113" height="17" rx="3"/><rect x="136" y="326" width="113" height="17" rx="3"/><rect x="136" y="462" width="113" height="99" rx="3"/></g>
      <text x="141" y="234" font-size="7" fill="#ddd">post_text</text><text x="141" y="286" font-size="7" fill="#ddd">label</text>
      <rect x="138" y="329" width="18" height="12" rx="2" fill="#ff4b4f"/><rect x="136" y="367" width="50" height="14" fill="#1a1c24"/>
      <g font-size="6" fill="#ccc"><text x="162" y="377">post_text</text><text x="162" y="391">It's just me</text><text x="162" y="405">It's Sunday</text><text x="162" y="419">Awake tired</text></g>
      ${chipW.map((w, i) => svg`<rect x="138" y=${465 + i * 15.3} width=${w} height="12" rx="2" fill="#ff4b4f"></rect><text x="142" y=${474 + i * 15.3} font-size="6.500" fill="#ffdada">${CHIPS[i][0]}</text>`)}
      <g fill="#bbb"><circle cx="231" cy="335" r="3"/><circle cx="231" cy="517" r="3"/></g><path d="M238 231h5M238 282h5M238 335h5M238 517h5M247 156h4" stroke="#ccc" stroke-width="2"/>
      <rect x="96" y="561" width="768" height="3" fill="#fff"/>
      <g fill="#fafafa" font-weight="700"><text x="419" y="178" font-size="11.500" textLength="94" lengthAdjust="spacingAndGlyphs">LDA Topic Modeling</text><text x="419" y="201" font-size="11.500" textLength="118" lengthAdjust="spacingAndGlyphs">Topic Word Distributions</text></g>
      <text x="825" y="158" font-size="7" fill="#eee">Deploy</text>
      ${Array.from({ length: 13 }, (_, k) => svg`<text x="419" y=${218 + k * 27} font-size="7.500" fill="#d8d8da" textLength=${240 + ((k * 37) % 43)} lengthAdjust="spacingAndGlyphs">${miniLine(k, 0, 6, `Topic ${k}: `)}</text>
        <text x="419" y=${228.500 + k * 27} font-size="7.500" fill="#d8d8da" textLength=${128 + ((k * 53) % 100)} lengthAdjust="spacingAndGlyphs">${miniLine(k, 6, 4, "")}</text>`)}
      <g fill="none" stroke="#bbb" stroke-width="1.500"><rect x="106" y="152" width="8" height="8"/></g>
      <g><rect x="107" y="173" width="8" height="8" fill="#555"/><circle cx="111" cy="198" r="4" fill="#25292c"/><rect x="107" y="215" width="7" height="8" fill="#2c7a9a"/><rect x="106" y="239" width="9" height="4" fill="#93652f"/><rect x="107" y="260" width="8" height="8" fill="#555"/><circle cx="111" cy="285" r="4" fill="#ccc"/><rect x="109" y="303" width="3" height="8" fill="#2b6880"/><rect x="107" y="327" width="8" height="3" fill="#888"/><rect x="102" y="341" width="17" height="17" rx="2" fill="#6b6c70"/><circle cx="111" cy="350" r="4" fill="#eee"/><circle cx="110" cy="371" r="5" fill="#2f7cf6"/><path d="M106 396h8M110 392v8" stroke="#ccc" stroke-width="1.500"/></g>
      <rect x="777" y="505" width="78" height="50" fill="#0b0c12" stroke="#3c3c42" stroke-width="1.500"/><rect x="778" y="506" width="76" height="6" fill="#3a3a3d"/><rect x="781" y="512" width="13" height="42" fill="#262730"/><rect x="783" y="543" width="7" height="11" fill="#c73c42"/>
      <path d="M811 516h10M811 522h24M811 527h22M811 532h25M811 537h20M811 542h24" stroke="#555" stroke-width="1.500"/>
      <path d="M261 559h500" stroke="#66666b" stroke-width="2.500"/><path d="M859.500 273v118" stroke="#88888d" stroke-width="3"/>
    </svg></div>`;
  }

  render() {
    return html`<div class="desktop">
      ${this.menubar()}
      <div class="window">
        ${this.titlebar()}${this.toolbar()}
        <div class="body">${this.rail()}
          <div class="page"><div class="strip"></div><div class="panes">${this.sidebar()}${this.main()}</div></div>
        </div>
      </div>
      ${this.thumb()}
      <svg class="corner" width="6" height="6" viewBox="0 0 6 6"><path d="M0 0h6c-1 3-3 5-6 6Z" fill="#f2f2f2"/></svg>
    </div>`;
  }
}
